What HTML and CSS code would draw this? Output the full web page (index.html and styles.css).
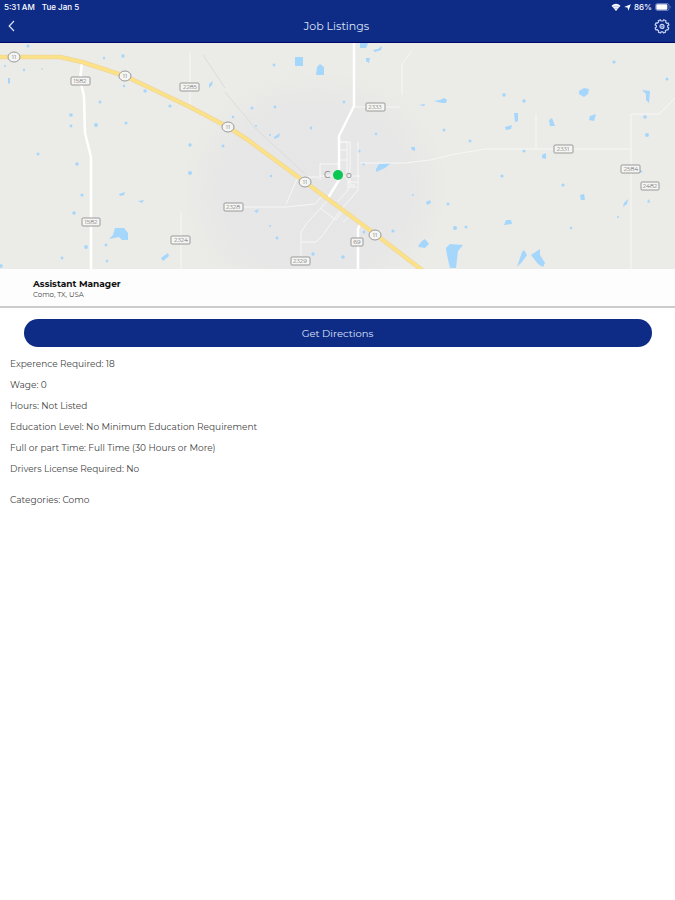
FILE: index.html
```html
<!DOCTYPE html>
<html lang="en">

<head>
    <meta charset="UTF-8">
    <meta name="viewport" content="width=device-width, initial-scale=1.0">
    <title>Job Listings</title>
    <link rel="stylesheet" href="styles.css">
</head>

<body>
    <header class="header">
        <div class="status-bar">
            <div class="status-left">
                <span>5:31 AM</span>
                <span>Tue Jan 5</span>
            </div>
            <div class="status-right">
                <svg class="wifi" viewBox="0 0 10 8" aria-hidden="true">
                    <path d="M5 8 L.5 2.7 Q5 -1.2 9.5 2.7 Z" fill="#fff" />
                    <path d="M1.8 4.2 Q5 1.5 8.2 4.2 M3.2 5.8 Q5 4.3 6.8 5.8" fill="none" stroke="#0e2b86" stroke-width=".3" />
                </svg>
                <svg class="arrow" viewBox="0 0 8 8" aria-hidden="true">
                    <path d="M7.8 .2 L5 7.8 L4 4 L.2 3.5 Z" fill="#fff" />
                </svg>
                <span>86%</span>
                <svg class="battery" viewBox="0 0 16 8" aria-hidden="true">
                    <rect x=".5" y=".5" width="13.5" height="7" rx="2" fill="none" stroke="#7f90c8" stroke-width=".8" />
                    <rect x="1.3" y="1.2" width="11" height="5.6" rx="1" fill="#fff" />
                    <path d="M15 2.8 Q16 4 15 5.2 Z" fill="#9eabd7" />
                </svg>
            </div>
        </div>
        <div class="nav-bar">
            <button class="icon-btn" type="button" aria-label="Back">
                <svg class="back-icon" viewBox="0 0 14 14" aria-hidden="true">
                    <path d="M9 2 L4.2 7 L9 12" fill="none" stroke="#dfe5fa" stroke-width="1.2" />
                </svg>
            </button>
            <h1 class="title">Job Listings</h1>
            <button class="icon-btn" type="button" aria-label="Settings">
                <svg class="gear-icon" viewBox="0 0 16 16" fill="none" stroke="#cbd5f5" stroke-width="1.2" stroke-linejoin="round" aria-hidden="true">
                    <path d="M6.4 1.8 L7 3 H9 L9.6 1.8 L12 2.8 L11.6 4.1 L12.9 5.4 L14.2 5 L14.9 7 L13.7 7.6 V9.2 L14.8 9.9 L13.9 12 L12.5 11.8 L11.3 13 L11.5 14.2 L9.5 15 L8.8 13.8 H7.2 L6.5 15 L4.4 14.2 L4.7 12.9 L3.4 11.7 L2 12 L1.1 9.9 L2.3 9.2 V7.6 L1.1 6.9 L2 4.9 L3.4 5.2 L4.6 4 L4.3 2.7 Z" />
                    <circle cx="8" cy="8.4" r="2" />
                    <circle cx="8" cy="8.4" r=".3" />
                </svg>
            </button>
        </div>
    </header>

    <main>
        <section class="map" aria-label="Map">
            <svg class="map-canvas" viewBox="0 43 675 226" preserveAspectRatio="xMidYMid slice">
                <defs>
                    <radialGradient id="town">
                        <stop offset="0" stop-color="#e6e6e7" />
                        <stop offset=".7" stop-color="#e7e7e7" />
                        <stop offset="1" stop-color="#ebebe7" />
                    </radialGradient>
                </defs>
                <rect class="land" x="0" y="43" width="675" height="226" />
                <ellipse cx="315" cy="190" rx="135" ry="120" fill="url(#town)" />

                <!-- ponds -->
                <g class="water">
                    <path d="M295 57 h8 v9 h-8 z" />
                    <path d="M317 67 l3 -3 l4 3 v8 h-8 z" />
                    <path d="M360 43 h8 l-2 5 h-6 z" />
                    <path d="M373 50 l5 -1 l4 -3 l-1 4 l-6 2 z" />
                    <path d="M366 58 l4 0 l-1 5 l-3 -2 z" />
                    <path d="M579 91 l5 -3 l5 1 l-1 5 l-4 3 l-5 -3 z" />
                    <path d="M642 90 l8 1 l-1 12 l-3 -3 l0 -6 z" />
                    <path d="M514 113 h4 v8 l-3 1 z" />
                    <path d="M505 127 l7 -2 l-1 4 l-5 1 z" />
                    <path d="M549 120 l3 -2 l3 8 l-5 0 z" />
                    <path d="M590 116 l6 -2 l-2 7 l-5 -1 z" />
                    <path d="M434 101 l6 -1 l4 -2 l3 2 l-1 3 l-4 0 z" />
                    <path d="M419 105 l6 -1 l-1 2 z" />
                    <path d="M115 228 h9 l4 5 l0 7 l-6 0 l-3 -3 l-10 2 l4 -4 z" />
                    <path d="M161 258 l7 -5 l1 3 l-6 5 z" />
                    <path d="M376 169 l3 -5 l12 -1 l-6 5 l-9 4 z" />
                    <path d="M418 246 l4 -5 l3 -2 l4 5 l-4 4 l-6 -1 z" />
                    <path d="M446 248 l4 -4 l13 1 l-5 6 l-2 17 h-6 l-3 -13 z" />
                    <path d="M517 267 l5 -15 l2 -2 l3 5 l-5 7 z" />
                    <path d="M531 255 l9 -6 l0 6 l5 8 l-2 4 l-5 -3 z" />
                    <path d="M426 202 l4 -2 l1 3 l-4 2 z" />
                    <path d="M506 220 l5 0 l1 4 l-8 1 z" />
                    <path d="M580 195 l4 -1 l1 6 l-4 0 z" />
                    <path d="M624 203 l4 -4 l-1 5 l-4 3 z" />
                    <path d="M542 155 l4 -2 v6 l-4 -1 z" />
                    <path d="M209 84 l4 -3 l-1 4 l-3 3 z" />
                    <path d="M274 137 l6 -4 l-1 4 l-5 2 z" />
                    <path d="M411 147 h4 v4 l-3 -1 z" />
                    <path d="M119 194 l6 -2 l-1 3 l-4 1 z" />
                    <path d="M138 201 l6 -1 l-2 3 z" />
                    <path d="M8 78 h2 v5 l-2 1 z" />
                    <path d="M254 211 l5 -2 l-2 4 z" />
                    <path d="M361 163 l4 0 l-1 3 z" />
                    <path d="M638 168 l5 4 l-4 1 z" />
                    <path d="M647 202 l2 -3 l1 4 z" />
                </g>
                <g class="water">
                    <circle cx="28" cy="46" r="1.5" />
                    <circle cx="104" cy="58" r="1.2" />
                    <circle cx="123" cy="56" r="1.7" />
                    <circle cx="5" cy="66" r="1" />
                    <circle cx="24" cy="70" r="1.2" />
                    <circle cx="42" cy="69" r=".8" />
                    <circle cx="124" cy="86" r="1.2" />
                    <circle cx="145" cy="91" r="1.7" />
                    <circle cx="100" cy="102" r="1.5" />
                    <circle cx="170" cy="106" r="1.6" />
                    <circle cx="71" cy="115" r="1.8" />
                    <circle cx="71" cy="126" r="1.4" />
                    <circle cx="96" cy="125" r="1.9" />
                    <circle cx="126" cy="123" r="1.5" />
                    <circle cx="190" cy="145" r="1.7" />
                    <circle cx="223" cy="146" r="1.5" />
                    <circle cx="190" cy="173" r="2" />
                    <circle cx="38" cy="154" r="1.5" />
                    <circle cx="77" cy="164" r="1.7" />
                    <circle cx="82" cy="195" r="1.6" />
                    <circle cx="74" cy="213" r="1.8" />
                    <circle cx="86" cy="247" r="1.9" />
                    <circle cx="62" cy="258" r="1.4" />
                    <circle cx="106" cy="245" r="1.4" />
                    <circle cx="107" cy="261" r="1.3" />
                    <circle cx="1" cy="266" r="1.8" />
                    <circle cx="233" cy="117" r="1.2" />
                    <circle cx="252" cy="108" r="1.5" />
                    <circle cx="275" cy="107" r="1.4" />
                    <circle cx="274" cy="65" r="1.4" />
                    <circle cx="256" cy="126" r="1" />
                    <circle cx="270" cy="135" r="1" />
                    <circle cx="311" cy="128" r="1.4" />
                    <circle cx="344" cy="102" r="1.4" />
                    <circle cx="376" cy="134" r="1.2" />
                    <circle cx="359" cy="151" r="1.5" />
                    <circle cx="444" cy="130" r="1.5" />
                    <circle cx="271" cy="176" r="1.3" />
                    <circle cx="270" cy="226" r="1" />
                    <circle cx="277" cy="238" r="1.4" />
                    <circle cx="313" cy="254" r="1.7" />
                    <circle cx="343" cy="257" r="1.8" />
                    <circle cx="364" cy="232" r="1.5" />
                    <circle cx="393" cy="231" r="1.6" />
                    <circle cx="413" cy="195" r="1" />
                    <circle cx="448" cy="204" r="1.5" />
                    <circle cx="455" cy="228" r="2" />
                    <circle cx="466" cy="227" r="1.5" />
                    <circle cx="502" cy="176" r="1.6" />
                    <circle cx="524" cy="151" r="1.6" />
                    <circle cx="563" cy="185" r="1.6" />
                    <circle cx="470" cy="141" r="1.5" />
                    <circle cx="504" cy="95" r="1.8" />
                    <circle cx="524" cy="101" r="1.7" />
                    <circle cx="614" cy="62" r="1.6" />
                    <circle cx="667" cy="79" r="1.5" />
                    <circle cx="645" cy="117" r="1.8" />
                    <circle cx="647" cy="135" r="2" />
                    <circle cx="571" cy="228" r="1.2" />
                    <circle cx="618" cy="217" r="1" />
                </g>

                <!-- back roads -->
                <path class="rail" d="M203 55 L225 88 M225 92 L255 128 L305 174" />
                <g class="street">
                    <path d="M190 52 V107" />
                    <path d="M181 212 V269" />
                    <path d="M243 207 H286 L315 204 L322 196" />
                    <path d="M286 204 L298 177 H319" />
                    <path d="M354 107 H400 M412 51 L402 64 V95" />
                    <path d="M360 163 H405 L430 160 L455 154 L486 149 H631" />
                    <path d="M536 115 V149 M631 149 V114 H659 L675 98" />
                    <path d="M631 149 V269" />
                    <path d="M339 142 H347 V180 M339 142 H350 V185 H355 M339 150 H347 M339 160 H347" />
                    <path d="M320 164 H339 M320 164 V180 M320 176 H360 M348 182 H357 M348 187 H356" />
                    <path d="M358 142 V190 L340 211 L322 236 L316 242 H301 V256" />
                    <path d="M301 242 V232 L307 223 L329 199 M320 208 L336 220 L342 212" />
                    <path d="M338 201 L348 190 V180 M343 222 L350 216" />
                </g>

                <!-- main roads -->
                <path class="road" d="M82 62 L80 80 L84 96 L85 133 L91 157 V269" />
                <path class="road" d="M354 43 V106 L339 136 V180 L328 198" />
                <path class="road" d="M361 222 L358 229 V269" />
                <path class="highway-edge" d="M-4 57 H60 L82 62 L125 76 L188 106 L228 127 L248 140 L305 182 L375 234 L426 273" />
                <path class="highway" d="M-4 57 H60 L82 62 L125 76 L188 106 L228 127 L248 140 L305 182 L375 234 L426 273" />

                <!-- road numbers -->
                <g class="shield">
                    <rect x="71" y="77" width="19" height="8" rx="1" />
                    <rect x="180" y="83" width="19" height="8" rx="1" />
                    <rect x="366" y="103" width="19" height="8" rx="1" />
                    <rect x="554" y="145" width="19" height="8" rx="1" />
                    <rect x="621" y="165" width="19" height="8" rx="1" />
                    <rect x="641" y="182" width="18" height="8" rx="1" />
                    <rect x="224" y="203" width="19" height="8" rx="1" />
                    <rect x="82" y="218" width="18" height="8" rx="1" />
                    <rect x="171" y="236" width="19" height="8" rx="1" />
                    <rect x="351" y="238" width="12" height="8" rx="1" />
                    <rect x="291" y="257" width="19" height="8" rx="1" />
                    <ellipse cx="14" cy="57" rx="6" ry="5" />
                    <ellipse cx="125" cy="76" rx="6" ry="5" />
                    <ellipse cx="228" cy="127" rx="6" ry="5" />
                    <ellipse cx="305" cy="182" rx="6" ry="5" />
                    <ellipse cx="375" cy="235" rx="6" ry="5" />
                </g>
                <g class="road-label">
                    <text x="80" y="83">1582</text>
                    <text x="190" y="89">2285</text>
                    <text x="375" y="109">2333</text>
                    <text x="563" y="151">2331</text>
                    <text x="631" y="171">2584</text>
                    <text x="650" y="188">2482</text>
                    <text x="233" y="209">2328</text>
                    <text x="91" y="224">1582</text>
                    <text x="181" y="242">2324</text>
                    <text x="357" y="244">69</text>
                    <text x="300" y="263">2329</text>
                    <text x="14" y="59">11</text>
                    <text x="125" y="78">11</text>
                    <text x="228" y="129">11</text>
                    <text x="305" y="184">11</text>
                    <text x="375" y="237">11</text>
                </g>

                <text class="town-label" x="324" y="178">C</text>
                <text class="town-label" x="346" y="178">o</text>
                <circle class="pin" cx="338" cy="175" r="5" />
            </svg>
        </section>

        <section class="job-info">
            <h2 class="job-title">Assistant Manager</h2>
            <p class="job-place">Como, TX, USA</p>
        </section>

        <section class="details">
            <button class="directions-btn" type="button">Get Directions</button>
            <div class="detail-list">
                <p>Experence Required: 18</p>
                <p>Wage: 0</p>
                <p>Hours: Not Listed</p>
                <p>Education Level: No Minimum Education Requirement</p>
                <p>Full or part Time: Full Time (30 Hours or More)</p>
                <p>Drivers License Required: No</p>
                <p class="categories">Categories: Como</p>
            </div>
        </section>
    </main>
</body>

</html>
```
FILE: styles.css
```css
:root {
    --blue: #0e2b86;
    --text: #444;
}

* {
    box-sizing: border-box;
}

body {
    margin: 0;
    background-color: #fff;
    color: var(--text);
    font-family: Montserrat, Inter, sans-serif;
}

h1,
h2,
p {
    margin: 0;
}

.header {
    background-color: var(--blue);
    border-bottom: 1px solid #02086b;
    color: #fff;
}

.status-bar {
    display: flex;
    justify-content: space-between;
    padding: 0 4px;
    font-family: Inter, sans-serif;
    font-size: 8px;
    font-weight: 500;
    line-height: 14px;
}

.status-left {
    display: flex;
    gap: 7px;
}

.status-right {
    display: flex;
    align-items: center;
    gap: 3px;
}

.wifi {
    width: 10px;
    height: 8px;
}

.arrow {
    width: 7px;
    height: 7px;
}

.battery {
    width: 16px;
    height: 8px;
}

.nav-bar {
    display: flex;
    align-items: center;
    justify-content: space-between;
    height: 28px;
    padding: 0 5px 4px;
}

.title {
    color: #dfe5fa;
    font-size: 11px;
    font-weight: 400;
}

.icon-btn {
    display: flex;
    padding: 0;
    border: 0;
    background: none;
    cursor: pointer;
}

.back-icon {
    width: 14px;
    height: 14px;
}

.gear-icon {
    width: 16px;
    height: 16px;
}

/* Map */
.map-canvas {
    display: block;
    width: 100%;
    height: 226px;
}

.land {
    fill: #ebebe7;
}

.water {
    fill: #a5d6fc;
}

.street,
.rail,
.road,
.highway,
.highway-edge {
    fill: none;
    stroke-linejoin: round;
}

.street {
    stroke: #f7f7f7;
    stroke-width: 1;
}

.rail {
    stroke: #dcdcdc;
    stroke-width: 1;
}

.road {
    stroke: #fff;
    stroke-width: 2.5;
}

.highway-edge {
    stroke: #f0d69a;
    stroke-width: 4.5;
}

.highway {
    stroke: #fce287;
    stroke-width: 3;
}

.shield {
    fill: #f5f5f3;
    stroke: #999;
    stroke-width: 1;
}

.road-label {
    fill: #777;
    font-size: 6px;
    text-anchor: middle;
}

.town-label {
    fill: #777;
    font-size: 9px;
}

.pin {
    fill: #0ac653;
}

/* Job */
.job-info {
    padding: 8px 33px 7px;
    border-bottom: 2px solid #ccc;
    background-color: #fdfdfd;
}

.job-title {
    color: #111;
    font-size: 9px;
    font-weight: 700;
    line-height: 13px;
}

.job-place {
    font-size: 7px;
    line-height: 9px;
}

.details {
    padding: 11px 0;
}

.directions-btn {
    display: block;
    width: calc(100% - 47px);
    height: 28px;
    margin: 0 auto;
    border: 0;
    border-radius: 14px;
    background-color: var(--blue);
    color: #dfe5fa;
    font-family: inherit;
    font-size: 10px;
    cursor: pointer;
}

.detail-list {
    padding: 6px 10px;
    font-size: 9px;
    line-height: 21px;
}

.categories {
    margin-top: 10px;
}
```
